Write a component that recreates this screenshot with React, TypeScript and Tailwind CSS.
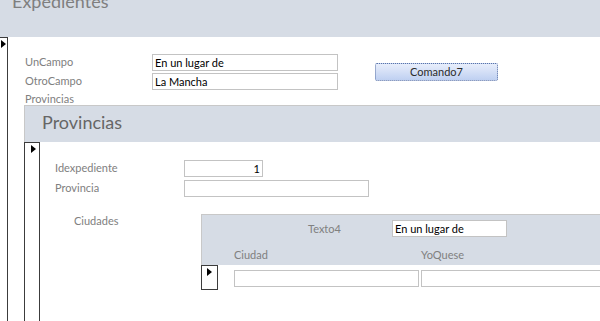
function Arrow() {
  return (
    <svg width="5" height="8" viewBox="0 0 5 8" className="block">
      <path d="M0 0L5 4L0 8Z" fill="#000" />
    </svg>
  );
}

function Field({ value = '', className = '', right = false }: { value?: string; className?: string; right?: boolean }) {
  return (
    <div
      className={`h-[17px] border border-[#c3c3c3] bg-white px-[2px] text-[11px] leading-[15px] text-black ${right ? 'text-right' : ''} ${className}`}
    >
      {value}
    </div>
  );
}

export default function App() {
  return (
    <div className="w-[600px] h-[321px] overflow-hidden bg-white font-['Lato',sans-serif] text-[11px] text-[#808080]">
      {/* Form header */}
      <div className="h-[37px] overflow-hidden bg-[#d6dce5] pl-[12px]">
        <div className="-mt-[11px] text-[18px] leading-[24px] text-[#7f7f7f]">Expedientes</div>
      </div>

      <div className="flex h-[284px]">
        {/* Record selector */}
        <div className="w-[8px] shrink-0 border-t border-r border-[#3c3c3c] pt-[2px] pl-[1px]">
          <Arrow />
        </div>

        <div className="flex-1 min-w-0 pl-[16px] pt-[17px]">
          <div className="flex">
            <div>
              <div className="flex h-[17px] items-center">
                <div className="w-[128px] pl-[1px]">UnCampo</div>
                <Field value="En un lugar de" className="w-[186px]" />
              </div>
              <div className="mt-[2px] flex h-[17px] items-center">
                <div className="w-[128px] pl-[1px]">OtroCampo</div>
                <Field value="La Mancha" className="w-[186px]" />
              </div>
            </div>
            <div className="ml-[37px] mt-[9px] flex h-[18px] w-[123px] items-center justify-center rounded-[2px] border border-dotted border-[#5b73a6] bg-gradient-to-b from-[#e8eefb] to-[#bfd0f1] text-[11px] text-[#2b2b2b]">
              Comando7
            </div>
          </div>

          <div className="h-[15px] pl-[1px] leading-[17px]">Provincias</div>

          {/* Subform Provincias */}
          <div className="border-t border-[#c8c8c8]">
            <div className="h-[36px] border-l border-[#c8c8c8] bg-[#d6dce5] pl-[17px] pt-[4px]">
              <div className="text-[18px] leading-[24px] text-[#666666]">Provincias</div>
            </div>
            <div className="flex h-[200px]">
              <div className="w-[16px] shrink-0 border-t border-l border-r border-[#3c3c3c] pt-[2px] pl-[6px]">
                <Arrow />
              </div>
              <div className="flex-1 min-w-0 pl-[15px] pt-[18px]">
                <div className="flex h-[17px] items-center">
                  <div className="w-[129px]">Idexpediente</div>
                  <Field value="1" right className="w-[79px]" />
                </div>
                <div className="mt-[3px] flex h-[17px] items-center">
                  <div className="w-[129px]">Provincia</div>
                  <Field className="w-[185px]" />
                </div>

                <div className="mt-[17px] flex">
                  <div className="w-[146px] shrink-0 pl-[19px] leading-[13px]">Ciudades</div>

                  {/* Subform Ciudades */}
                  <div className="flex-1 min-w-0 border-t border-l border-[#c8c8c8]">
                    <div className="h-[50px] bg-[#d6dce5]">
                      <div className="flex pt-[5px]">
                        <div className="w-[84px] pl-[106px] box-content leading-[17px]">Texto4</div>
                        <Field value="En un lugar de" className="w-[115px]" />
                      </div>
                      <div className="mt-[11px] flex leading-[13px]">
                        <div className="w-[219px] shrink-0 pl-[32px]">Ciudad</div>
                        <div>YoQuese</div>
                      </div>
                    </div>
                    <div className="flex">
                      <div className="-ml-px h-[25px] w-[17px] shrink-0 border border-[#3c3c3c] pt-[2px] pl-[5px]">
                        <Arrow />
                      </div>
                      <div className="ml-[16px] mt-[5px] flex gap-[2px]">
                        <Field className="w-[185px]" />
                        <Field className="w-[200px]" />
                      </div>
                    </div>
                  </div>
                </div>
              </div>
            </div>
          </div>
        </div>
      </div>
    </div>
  );
}
